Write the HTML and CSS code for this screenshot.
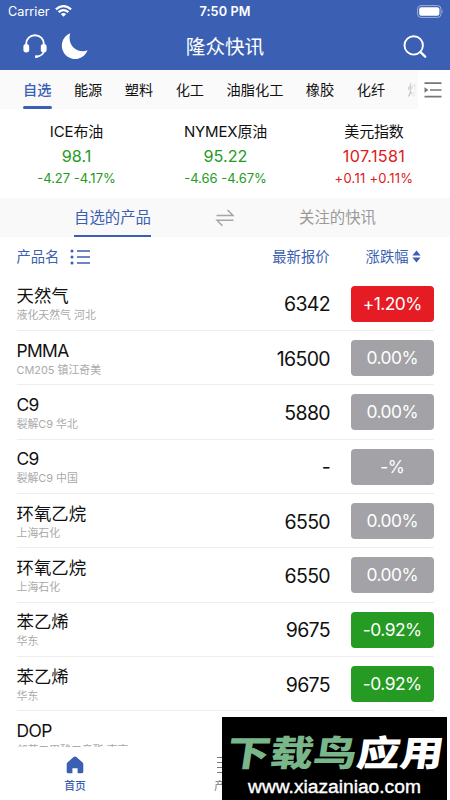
FILE: index.html
```html
<!DOCTYPE html>
<html lang="zh-CN">
<head>
<meta charset="utf-8">
<title>隆众快讯</title>
<link rel="stylesheet" href="styles.css">
</head>
<body>
<div class="app">
  <header class="header">
    <div class="status">
      <div class="carrier"><span>Carrier</span>
        <svg width="17" height="12" viewBox="0 0 17 12" fill="none" stroke="#fff" stroke-width="2.3"><path d="M.9 4.4Q8.5-2.1 16.1 4.4M3.6 7.2Q8.5 3 13.4 7.2"/><path d="M8.5 11.8 5.8 9.1Q8.5 6.9 11.2 9.1Z" fill="#fff" stroke="none"/></svg>
      </div>
      <div class="clock">7:50 PM</div>
      <div class="battery"><svg width="27" height="13" viewBox="0 0 27 13"><rect x=".6" y=".6" width="23.4" height="11.8" rx="3.4" fill="none" stroke="#a0afd9" stroke-width="1"/><rect x="2.2" y="2.2" width="20.2" height="8.6" rx="2" fill="#fff"/><path d="M25.2 4.6q1.5 1.9 0 3.8Z" fill="#a0afd9"/></svg></div>
    </div>
    <div class="navbar">
      <div class="nav-left">
        <svg width="24" height="25" viewBox="0 0 24 25" fill="none" stroke="#fff" stroke-width="1.9" stroke-linecap="round"><path d="M3.2 11V9.7a8.8 8.5 0 0 1 17.6 0V11M21 16.5q-.6 5.4-7.8 6.3"/><rect x=".4" y="10" width="5.8" height="8.4" rx="2.7" fill="#fff" stroke="none"/><rect x="17.8" y="10" width="5.8" height="8.4" rx="2.7" fill="#fff" stroke="none"/><circle cx="13.4" cy="22.7" r="1.4" fill="#fff" stroke="none"/></svg>
        <svg width="27" height="27" viewBox="0 0 27 27"><path d="M9.3.3A13.3 13.3 0 1 0 26.6 17.3C16 21.2 5.6 11.6 9.3.3Z" fill="#fff"/></svg>
      </div>
      <h1 class="title">隆众快讯</h1>
      <svg class="search" width="24" height="24" viewBox="0 0 24 24" fill="none" stroke="#fff" stroke-width="1.9" stroke-linecap="round"><circle cx="10.7" cy="10.4" r="9.2"/><path d="m17.5 17.2 4.7 4.5" stroke-width="2.3"/></svg>
    </div>
  </header>

  <nav class="tabs">
    <div class="tab-list">
      <span class="tab active">自选</span><span class="tab">能源</span><span class="tab">塑料</span><span class="tab">化工</span><span class="tab">油脂化工</span><span class="tab">橡胶</span><span class="tab">化纤</span><span class="tab">煤</span>
    </div>
    <div class="tab-fade"></div>
    <div class="tab-menu"><svg width="18" height="18" viewBox="0 0 18 18"><path d="M.5 2.2H17.5M6 9H17.5M.5 15.7H17.5" stroke="#777" stroke-width="1.7"/><path d="m.5 6.2 4 2.8-4 2.8Z" fill="#777"/></svg></div>
  </nav>

  <section class="indices">
    <div class="index down"><b>ICE布油</b><strong>98.1</strong><small>-4.27 -4.17%</small></div>
    <div class="index down"><b>NYMEX原油</b><strong>95.22</strong><small>-4.66 -4.67%</small></div>
    <div class="index up"><b>美元指数</b><strong>107.1581</strong><small>+0.11 +0.11%</small></div>
  </section>

  <div class="segments">
    <div class="segment selected"><span>自选的产品</span></div>
    <svg width="20" height="18" viewBox="0 0 20 18" fill="none" stroke="#a5a5a5" stroke-width="1.5"><path d="M1.5 6.6H18L12.6 1M18.5 11.2H2L7.4 16.8"/></svg>
    <div class="segment"><span>关注的快讯</span></div>
  </div>

  <div class="table-head">
    <div class="head-name"><span>产品名</span><svg width="21" height="16" viewBox="0 0 21 16" fill="#3b5fb3"><circle cx="2" cy="2" r="1.5"/><circle cx="2" cy="8" r="1.5"/><circle cx="2" cy="14" r="1.5"/><path d="M7 2H20M7 8H20M7 14H20" stroke="#3b5fb3" stroke-width="1.4"/></svg></div>
    <div class="head-price">最新报价</div>
    <div class="head-change">涨跌幅<svg width="9" height="13" viewBox="0 0 9 13"><path d="M4.5.5 8.6 5.4H.4ZM4.5 12.5.4 7.6H8.6Z" fill="#3b5fb3"/></svg></div>
  </div>

  <main class="rows">
    <div class="row"><div class="name"><b>天然气</b><small>液化天然气 河北</small></div><span class="price">6342</span><span class="badge rise">+1.20%</span></div>
    <div class="row"><div class="name"><b class="latin">PMMA</b><small>CM205 镇江奇美</small></div><span class="price">16500</span><span class="badge">0.00%</span></div>
    <div class="row"><div class="name"><b class="latin">C9</b><small>裂解C9 华北</small></div><span class="price">5880</span><span class="badge">0.00%</span></div>
    <div class="row"><div class="name"><b class="latin">C9</b><small>裂解C9 中国</small></div><span class="price">-</span><span class="badge">-%</span></div>
    <div class="row"><div class="name"><b>环氧乙烷</b><small>上海石化</small></div><span class="price">6550</span><span class="badge">0.00%</span></div>
    <div class="row"><div class="name"><b>环氧乙烷</b><small>上海石化</small></div><span class="price">6550</span><span class="badge">0.00%</span></div>
    <div class="row"><div class="name"><b>苯乙烯</b><small>华东</small></div><span class="price">9675</span><span class="badge fall">-0.92%</span></div>
    <div class="row"><div class="name"><b>苯乙烯</b><small>华东</small></div><span class="price">9675</span><span class="badge fall">-0.92%</span></div>
    <div class="row"><div class="name"><b class="latin">DOP</b><small>邻苯二甲酸二辛酯 南京</small></div></div>
  </main>

  <footer class="tabbar">
    <div class="item current"><svg width="18" height="18" viewBox="0 0 18 18"><path d="M9 .5Q9.7.5 10.4 1L16.6 6.4Q17.3 7 17.3 8V15.8Q17.3 17.3 15.8 17.3H11.6V12.2H6.4V17.3H2.2Q.7 17.3.7 15.8V8Q.7 7 1.4 6.4L7.6 1Q8.3.5 9 .5Z" fill="#3b5fb3"/></svg><span>首页</span></div>
    <div class="item"><svg width="18" height="18" viewBox="0 0 18 18"><path d="M1 1.5H17M1 6.5H17M1 11.5H17M1 16.5H17" stroke="#777" stroke-width="1.2"/></svg><span>产品</span></div>
    <div class="item"></div>
  </footer>

  <aside class="watermark">
    <div class="brand"><span>下载鸟</span>应用</div>
    <div class="site">www.xiazainiao.com</div>
  </aside>
</div>
</body>
</html>
```
FILE: styles.css
```css
* { box-sizing: border-box; }
body { margin: 0; font-family: Inter, "Noto Sans CJK SC", sans-serif; color: #111; background: #fff; }
svg { display: block; flex: none; }
b, strong, small { font-weight: 400; }
.app { position: relative; width: 450px; height: 800px; overflow: hidden; display: flex; flex-direction: column; }

.header { height: 70px; flex: none; background: #3b5fb3; color: #fff; }
.status { height: 23px; display: grid; grid-template-columns: 1fr auto 1fr; align-items: center; padding: 0 6px 0 8px; font-size: 12.7px; }
.carrier { display: flex; align-items: center; gap: 5px; }
.carrier svg { margin-top: -1px; }
.clock { font-weight: 600; letter-spacing: .1px; margin-left: -2px; }
.battery { display: flex; justify-content: flex-end; }
.navbar { height: 47px; display: grid; grid-template-columns: 1fr auto 1fr; align-items: center; padding: 0 23px; }
.nav-left { display: flex; align-items: center; gap: 14px; }
.title { margin: 0; font-size: 19.6px; line-height: 28px; font-weight: 400; }
.search { justify-self: end; }

.tabs { height: 39px; flex: none; display: flex; background: #fafafa; position: relative; }
.tab-list { width: 418px; padding-left: 23px; display: flex; gap: 22.5px; overflow: hidden; white-space: nowrap; }
.tab { flex: none; height: 39px; font-size: 14.2px; line-height: 39px; }
.tab.active { color: #3b5fb3; font-weight: 500; }
.tab.active::after { content: ""; display: block; height: 3px; margin: -3px -.5px 0; background: #3b5fb3; border-radius: 2px; }
.tab-fade { position: absolute; left: 392px; top: 0; width: 26px; height: 39px; background: linear-gradient(90deg, #fafafa00, #fafafa 95%); }
.tab-menu { width: 32px; display: flex; align-items: center; padding-left: 6px; background: #fff; }

.indices { height: 89px; flex: none; display: grid; grid-template-columns: 147px 151px 146px; padding: 11px 3px 0; text-align: center; }
.index { display: flex; flex-direction: column; }
.index b { font-size: 15px; line-height: 24px; letter-spacing: -.15px; }
.index strong { font-size: 16.2px; line-height: 24px; }
.index small { font-size: 13px; line-height: 20px; }
.up strong { letter-spacing: .3px; }
.up small { letter-spacing: .25px; }
.down strong, .down small { color: #259b24; }
.up strong, .up small { color: #dc2020; }

.segments { height: 39px; flex: none; display: grid; grid-template-columns: 215px 20px 205px; align-items: center; background: #f9f9f9; }
.segment { display: flex; justify-content: center; color: #999; font-size: 15.4px; line-height: 40px; }
.segment span { height: 39px; border-bottom: 2px solid transparent; }
.segment.selected { color: #3b5fb3; padding-left: 10px; }
.segment.selected span { border-color: #3b5fb3; }

.table-head { height: 39.5px; flex: none; display: grid; grid-template-columns: 1fr auto 104px; align-items: center; padding: 0 16.5px; color: #3b5fb3; font-size: 14.3px; line-height: 20px; }
.head-name { display: flex; align-items: center; gap: 11px; }
.head-change { display: flex; justify-content: flex-end; align-items: center; gap: 3px; padding-right: 13px; }

.rows { height: 470px; flex: none; padding: 0 16.5px; overflow: hidden; }
.row { height: 54.35px; display: grid; grid-template-columns: 1fr auto 82.5px; column-gap: 21px; align-items: center; border-bottom: 1px solid #eee; }
.name { display: flex; flex-direction: column; padding-top: 2px; }
.name b { font-size: 17.4px; line-height: 22px; }
.name .latin { letter-spacing: -.6px; }
.name small { font-size: 10.9px; line-height: 16px; color: #aaa; white-space: nowrap; }
.price { font-size: 19.5px; letter-spacing: -.65px; padding-top: 2px; }
.badge { height: 36px; border-radius: 4px; background: #a2a2a7; color: #fff; font-size: 17.4px; letter-spacing: -.5px; line-height: 36px; text-align: center; margin-top: 1px; }
.badge.rise { background: #e51c23; }
.badge.fall { background: #259b24; }

.tabbar { height: 53.5px; flex: none; display: grid; grid-template-columns: 150px 150px 150px; padding-top: 9.5px; background: #fff; }
.item { display: flex; flex-direction: column; align-items: center; gap: 5px; font-size: 10.8px; line-height: 16px; color: #777; }
.item.current { color: #3b5fb3; font-weight: 500; }

.watermark { position: absolute; left: 222px; top: 717px; width: 225px; height: 83px; background: #000; color: #fff; display: flex; flex-direction: column; align-items: center; }
.brand { font: 900 35.5px/40px "Noto Sans CJK SC", sans-serif; margin-top: 14px; white-space: nowrap; transform: translateX(1px) scaleX(1.22) skewX(-7deg); }
.brand span { color: #79b78a; }
.site { font: 19.2px/22px "Liberation Sans", sans-serif; margin-top: 5px; -webkit-text-stroke: .4px #fff; }
```
